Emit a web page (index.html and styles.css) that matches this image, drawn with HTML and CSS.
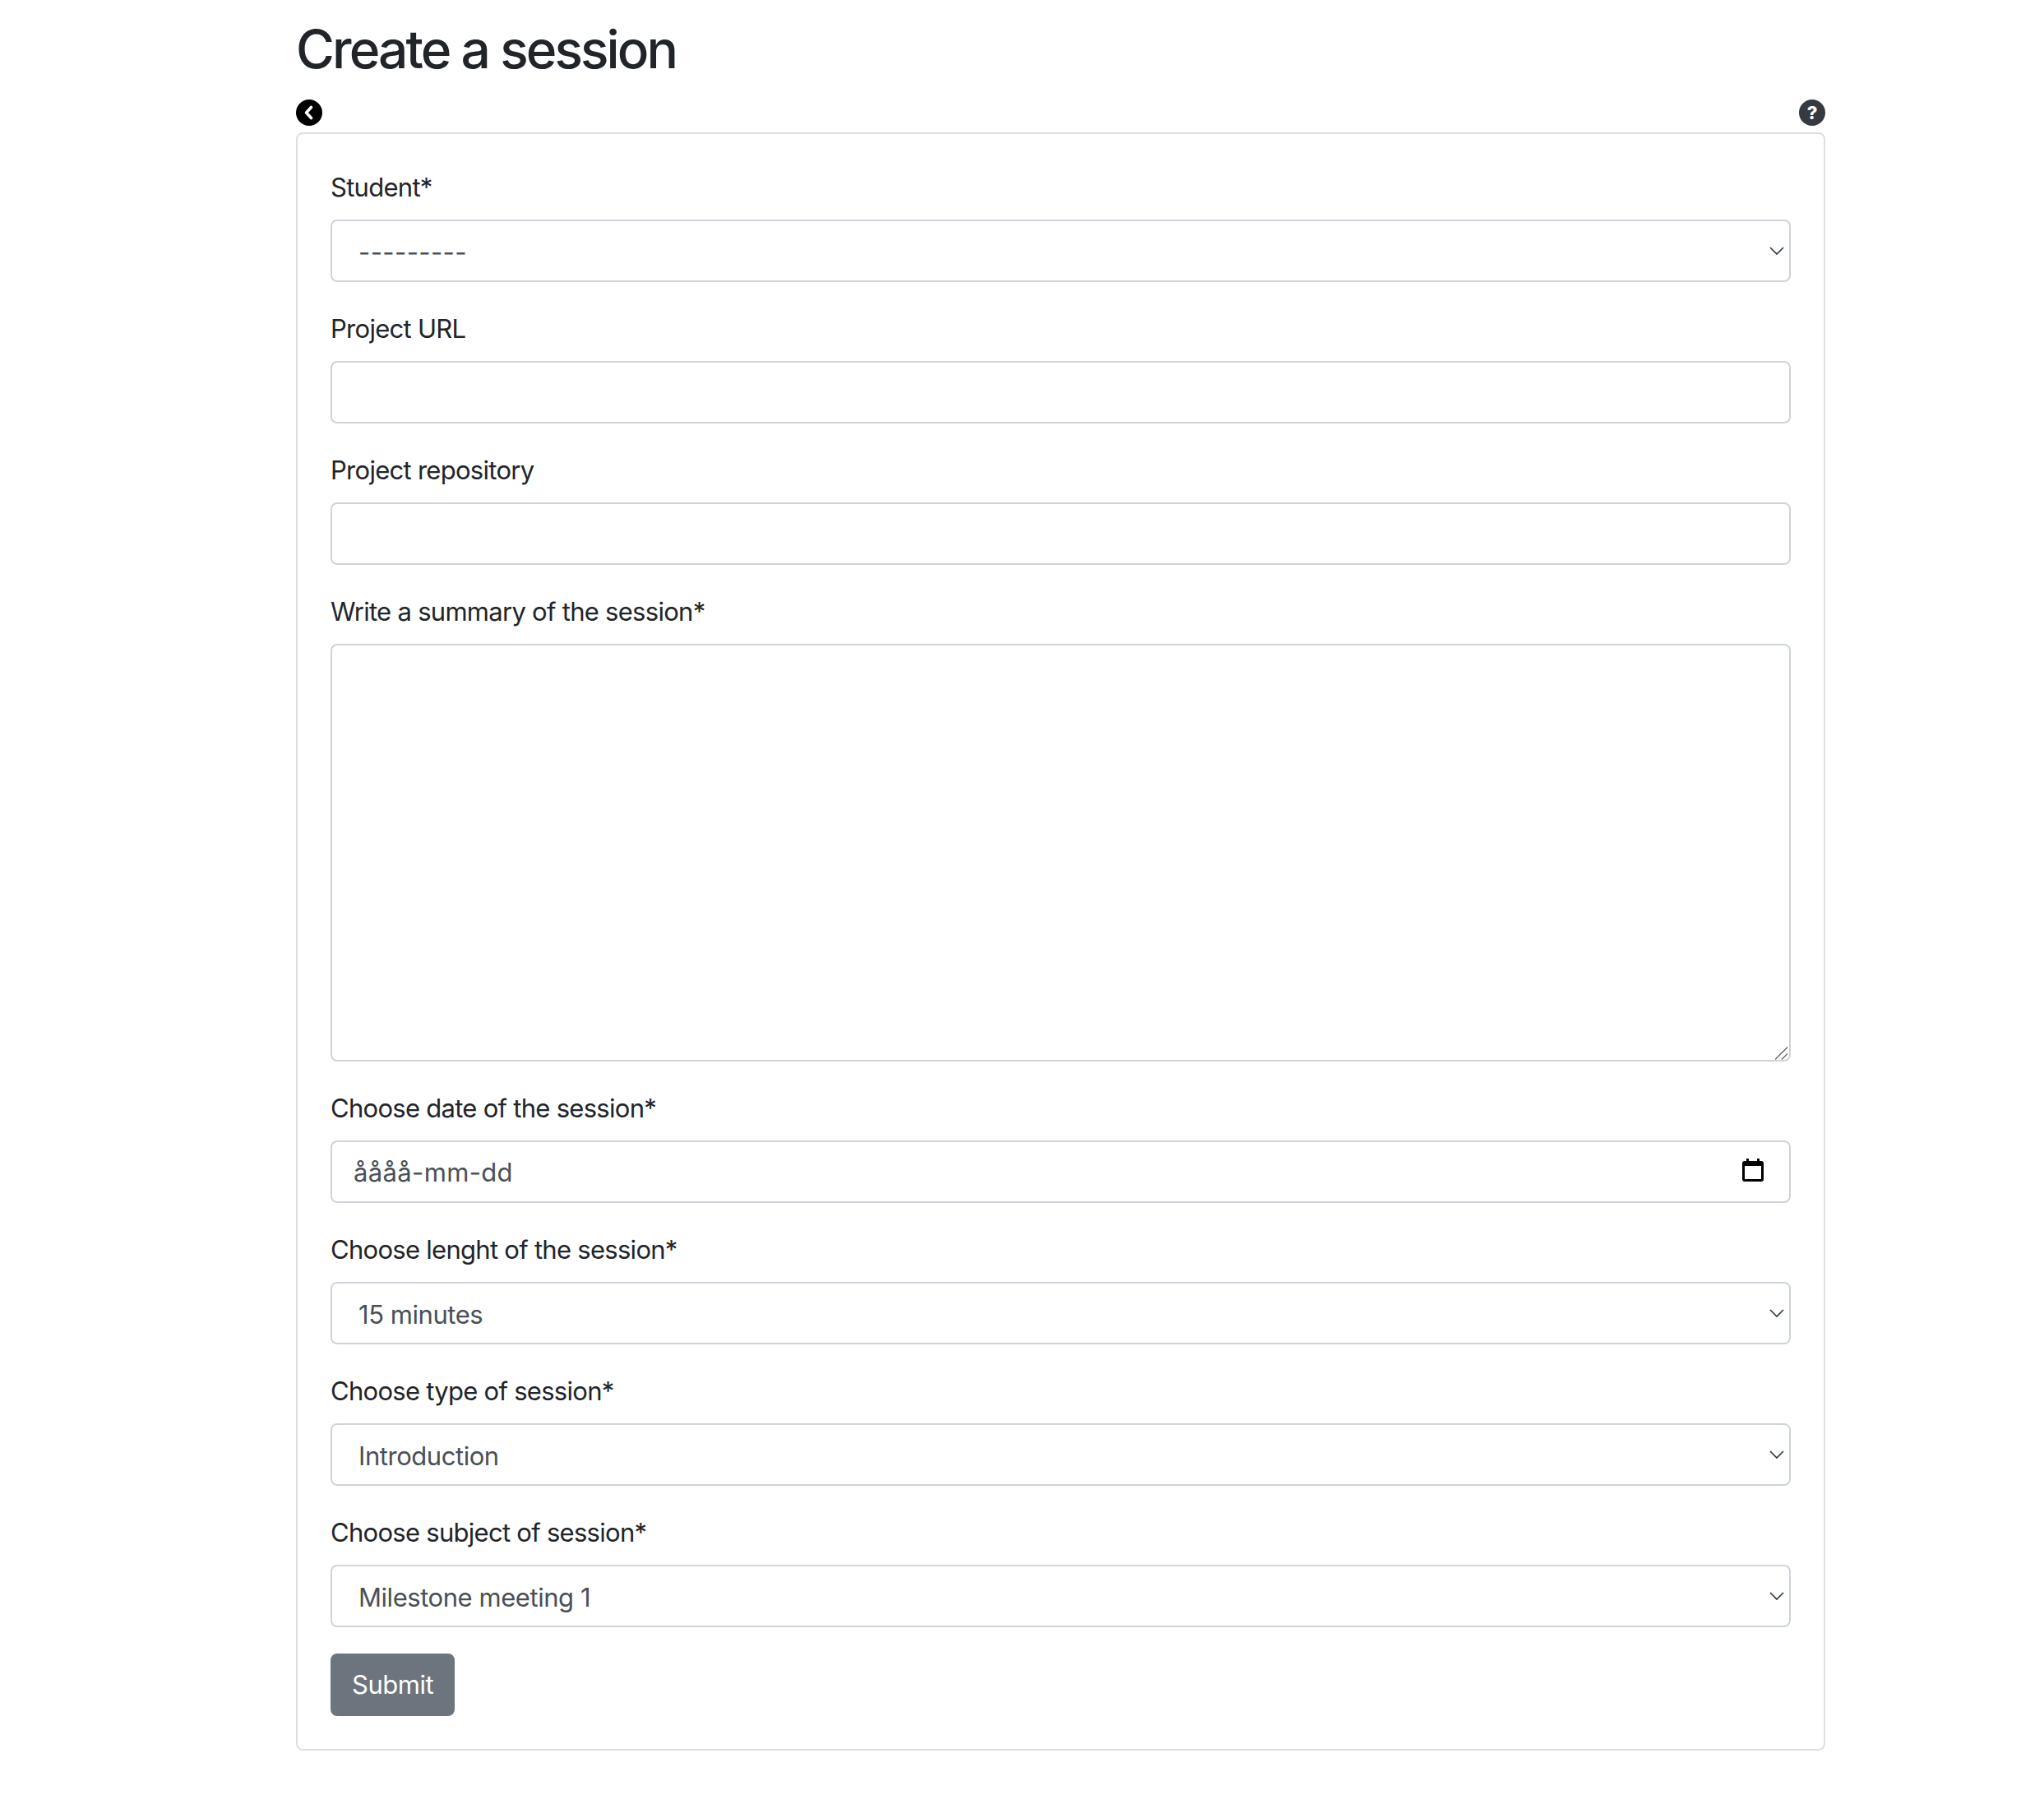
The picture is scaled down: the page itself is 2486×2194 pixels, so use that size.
FILE: index.html
```html
<!DOCTYPE html>
<html lang="en">
<head>
  <meta charset="UTF-8"/>
  <meta name="viewport" content="width=device-width,initial-scale=1.0"/>
  <title>Create a session</title>
  <link rel="stylesheet" href="styles.css">
</head>
<body>
  <div class="container">
    <h2 class="title">Create a session</h2>

    <div class="icon-row">
      <a class="round-icon back" href="#" aria-label="Back">
        <svg viewBox="0 0 32 32" width="32" height="32">
          <circle cx="16" cy="16" r="16" fill="#000"/>
          <path d="M18.5 9.5 L12.5 16 L18.5 22.5" fill="none" stroke="#fff" stroke-width="3.6" stroke-linecap="round" stroke-linejoin="round"/>
        </svg>
      </a>
      <a class="round-icon help" href="#" aria-label="Help">?</a>
    </div>

    <form class="card">
      <div class="field">
        <label for="student">Student*</label>
        <select id="student" class="form-select empty">
          <option>---------</option>
        </select>
      </div>

      <div class="field">
        <label for="url">Project URL</label>
        <input type="text" id="url" class="form-control"/>
      </div>

      <div class="field">
        <label for="repo">Project repository</label>
        <input type="text" id="repo" class="form-control"/>
      </div>

      <div class="field">
        <label for="summary">Write a summary of the session*</label>
        <div class="summary-wrap">
          <textarea id="summary" class="form-control summary"></textarea>
          <svg class="grip" viewBox="0 0 16 16" width="16" height="16">
            <path d="M0 15.5 L15 0.5 M8 15.5 L15 8.5" fill="none" stroke="#666" stroke-width="1.4"/>
          </svg>
        </div>
      </div>

      <div class="field">
        <label for="date">Choose date of the session*</label>
        <input type="text" id="date" class="form-control date" value="åååå-mm-dd"/>
      </div>

      <div class="field">
        <label for="length">Choose lenght of the session*</label>
        <select id="length" class="form-select">
          <option>15 minutes</option>
        </select>
      </div>

      <div class="field">
        <label for="type">Choose type of session*</label>
        <select id="type" class="form-select">
          <option>Introduction</option>
        </select>
      </div>

      <div class="field">
        <label for="subject">Choose subject of session*</label>
        <select id="subject" class="form-select">
          <option>Milestone meeting 1</option>
        </select>
      </div>

      <button type="button" class="submit">Submit</button>
    </form>
  </div>
</body>
</html>
```

FILE: styles.css
```css
* { box-sizing: border-box; }

body {
  margin: 0;
  background: #fff;
  color: #212529;
  font-family: Inter, "Liberation Sans", sans-serif;
  font-size: 31px;
  line-height: 48px;
}

.container {
  width: 1860px;
  margin-left: 360px;
  padding-bottom: 65px;
}

.title {
  margin: 0;
  padding-top: 21px;
  font-size: 64px;
  font-weight: 550;
  letter-spacing: -2.9px;
  line-height: 77px;
}

.icon-row {
  display: flex;
  justify-content: space-between;
  margin-top: 23px;
  margin-bottom: 8px;
}

.round-icon {
  display: block;
  width: 32px;
  height: 32px;
  text-decoration: none;
}

.round-icon svg { display: block; }

.help {
  border-radius: 50%;
  background: #343a40;
  color: #fff;
  font-size: 22px;
  font-weight: 800;
  line-height: 32px;
  text-align: center;
}

.card {
  border: 2px solid rgba(0,0,0,0.125);
  border-radius: 8px;
  padding: 40px;
}

.field { margin-bottom: 32px; }

label {
  display: block;
  padding-top: 1px;
  margin-bottom: 15px;
  letter-spacing: -0.72px;
}

.form-control, .form-select {
  display: block;
  width: 100%;
  height: 76px;
  padding: 12px 26px;
  border: 2px solid #ced4da;
  border-radius: 8px;
  background-color: #fff;
  color: #495057;
  font-family: inherit;
  font-size: 31px;
  line-height: 48px;
}

.form-select {
  padding: 14px 26px 10px 32px;
  appearance: none;
  letter-spacing: -0.45px;
  background-image: url("data:image/svg+xml,%3csvg xmlns='http://www.w3.org/2000/svg' viewBox='0 0 16 12'%3e%3cpath fill='none' stroke='%23343a40' stroke-width='1.3' d='M2 3l6 6 6-6'/%3e%3c/svg%3e");
  background-repeat: no-repeat;
  background-position: right 4px center;
  background-size: 22px 16px;
}

.form-select.empty { letter-spacing: 0.4px; }

.summary-wrap { position: relative; }

.summary {
  height: 508px;
  resize: none;
}

.grip {
  position: absolute;
  right: 3px;
  bottom: 2px;
}

.date {
  letter-spacing: 0.35px;
  background-image: url("data:image/svg+xml,%3csvg xmlns='http://www.w3.org/2000/svg' viewBox='0 0 26 28'%3e%3cpath d='M5 0h3v3h10V0h3v3h2a3 3 0 0 1 3 3v19a3 3 0 0 1-3 3H3a3 3 0 0 1-3-3V6a3 3 0 0 1 3-3h2zM3 9v16h20V9z'/%3e%3c/svg%3e");
  background-repeat: no-repeat;
  background-position: right 31px top 20px;
  background-size: 26px 28px;
}

.submit {
  display: block;
  height: 76px;
  margin-top: 32px;
  padding: 12px 24px;
  border: 2px solid #6c757d;
  border-radius: 8px;
  background: #6c757d;
  color: #fff;
  font-family: inherit;
  font-size: 31px;
  letter-spacing: -0.45px;
  line-height: 48px;
}
```
